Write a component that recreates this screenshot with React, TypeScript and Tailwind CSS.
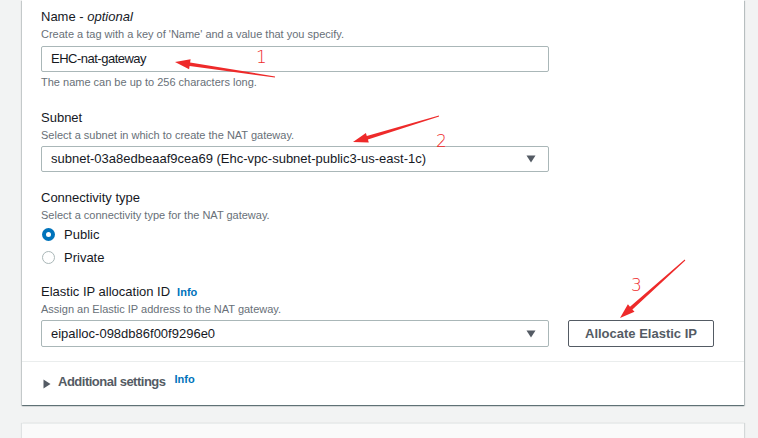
import React from "react";

type Pt = { x: number; y: number };

// tapered red annotation arrow, head at `to`
function Arrow({ from, to }: { from: Pt; to: Pt }) {
  const dx = to.x - from.x;
  const dy = to.y - from.y;
  const len = Math.hypot(dx, dy);
  const ux = dx / len;
  const uy = dy / len;
  const nx = -uy;
  const ny = ux;
  const H = 15;
  const W = 5;
  const bx = to.x - ux * H;
  const by = to.y - uy * H;
  const p = (x: number, y: number) => `${x.toFixed(1)},${y.toFixed(1)}`;
  const pts = [
    p(from.x + nx * 0.5, from.y + ny * 0.5),
    p(bx + nx * 1.8, by + ny * 1.8),
    p(bx + nx * W, by + ny * W),
    p(to.x, to.y),
    p(bx - nx * W, by - ny * W),
    p(bx - nx * 1.8, by - ny * 1.8),
    p(from.x - nx * 0.5, from.y - ny * 0.5),
  ].join(" ");
  return <polygon points={pts} fill="#ee2a2a" />;
}

function Label({ children }: { children: React.ReactNode }) {
  return <div className="text-[13px] leading-[18px] text-[#16191f]">{children}</div>;
}

function Hint({ children }: { children: React.ReactNode }) {
  return <div className="text-[11px] leading-[16px] text-[#687078]">{children}</div>;
}

function Caret() {
  return (
    <svg width="10" height="8" viewBox="0 0 10 8" className="shrink-0">
      <path d="M0.5 0.5 H9.5 L5 7.5 Z" fill="#545b64" />
    </svg>
  );
}

function SelectBox({ value, tall }: { value: string; tall?: boolean }) {
  return (
    <div
      className={`w-[508px] ${tall ? "h-[27px]" : "h-[26px]"} flex items-center justify-between border border-[#aab7b8] rounded-[2px] bg-white pl-[9px] pr-[12px] text-[13px] text-[#16191f]`}
    >
      <span>{value}</span>
      <Caret />
    </div>
  );
}

function Radio({ checked, label }: { checked?: boolean; label: string }) {
  return (
    <div className="h-[23px] flex items-center gap-[9px] pl-[1px]">
      {checked ? (
        <span className="w-[13px] h-[13px] rounded-full bg-[#0073bb] flex items-center justify-center">
          <span className="w-[5px] h-[5px] rounded-full bg-white" />
        </span>
      ) : (
        <span className="w-[13px] h-[13px] rounded-full border border-[#aab7b8] bg-white" />
      )}
      <span className="text-[13px] text-[#16191f]">{label}</span>
    </div>
  );
}

export default function App() {
  return (
    <div className="relative h-screen overflow-hidden bg-[#f2f3f3] font-['Liberation_Sans',Arial,sans-serif]">
      <div className="ml-[22px] w-[722px] bg-white shadow-[0_1px_1px_0_rgba(0,28,36,0.45),1px_1px_1px_0_rgba(0,28,36,0.18),-1px_1px_1px_0_rgba(0,28,36,0.12)]">
        <div className="pl-[19px] pt-[8px] pb-[14px]">
          {/* name */}
          <Label>
            Name - <i>optional</i>
          </Label>
          <Hint>Create a tag with a key of 'Name' and a value that you specify.</Hint>
          <div className="mt-[4px] w-[508px] h-[26px] flex items-center border border-[#aab7b8] rounded-[2px] pl-[9px] text-[13px] tracking-[-0.5px] text-[#16191f]">
            EHC-nat-gateway
          </div>
          <div className="mt-[2px]">
            <Hint>The name can be up to 256 characters long.</Hint>
          </div>

          {/* subnet */}
          <div className="mt-[19px]">
            <Label>Subnet</Label>
            <Hint>Select a subnet in which to create the NAT gateway.</Hint>
            <div className="mt-[3px]">
              <SelectBox value="subnet-03a8edbeaaf9cea69 (Ehc-vpc-subnet-public3-us-east-1c)" />
            </div>
          </div>

          {/* connectivity */}
          <div className="mt-[17px]">
            <Label>Connectivity type</Label>
            <Hint>Select a connectivity type for the NAT gateway.</Hint>
            <Radio checked label="Public" />
            <Radio label="Private" />
          </div>

          {/* elastic ip */}
          <div className="mt-[14px]">
            <div className="flex items-baseline gap-[7px]">
              <Label>Elastic IP allocation ID</Label>
              <span className="text-[11px] font-bold text-[#0073bb]">Info</span>
            </div>
            <Hint>Assign an Elastic IP address to the NAT gateway.</Hint>
            <div className="mt-[3px] flex items-center gap-[19px]">
              <SelectBox value="eipalloc-098db86f00f9296e0" tall />
              <button className="w-[146px] h-[27px] border border-[#545b64] rounded-[2px] bg-white text-[13px] font-bold text-[#545b64]">
                Allocate Elastic IP
              </button>
            </div>
          </div>
        </div>

        {/* additional settings */}
        <div className="h-[44px] border-t border-[#eaeded] flex items-center pl-[21px] pb-[3px]">
          <svg width="8" height="10" viewBox="0 0 8 10" className="mt-[3px]">
            <path d="M0.5 0.5 L7.5 5 L0.5 9.5 Z" fill="#545b64" />
          </svg>
          <span className="ml-[7px] text-[13px] leading-[18px] font-bold tracking-[-0.5px] text-[#545b64]">
            Additional settings
          </span>
          <span className="ml-[9px] mb-[6px] text-[11px] font-bold text-[#0073bb]">Info</span>
        </div>
      </div>

      <div className="mt-[18px] ml-[22px] w-[722px] h-[20px] bg-[#fafafa] border-t border-[#eaeded] shadow-[1px_0_1px_0_rgba(0,28,36,0.12),-1px_0_1px_0_rgba(0,28,36,0.08)]" />

      {/* red annotations */}
      <svg className="absolute inset-0 pointer-events-none" width="758" height="438">
        <Arrow from={{ x: 275, y: 77 }} to={{ x: 175, y: 62 }} />
        <Arrow from={{ x: 439, y: 116 }} to={{ x: 353, y: 142 }} />
        <Arrow from={{ x: 685, y: 260 }} to={{ x: 620, y: 318 }} />
        <g fill="#ee2a2a" fontFamily="'DejaVu Sans', sans-serif" fontSize="17" fontWeight="200">
          <text x="256" y="63">1</text>
          <text x="436" y="147">2</text>
          <text x="631" y="291">3</text>
        </g>
      </svg>
    </div>
  );
}
